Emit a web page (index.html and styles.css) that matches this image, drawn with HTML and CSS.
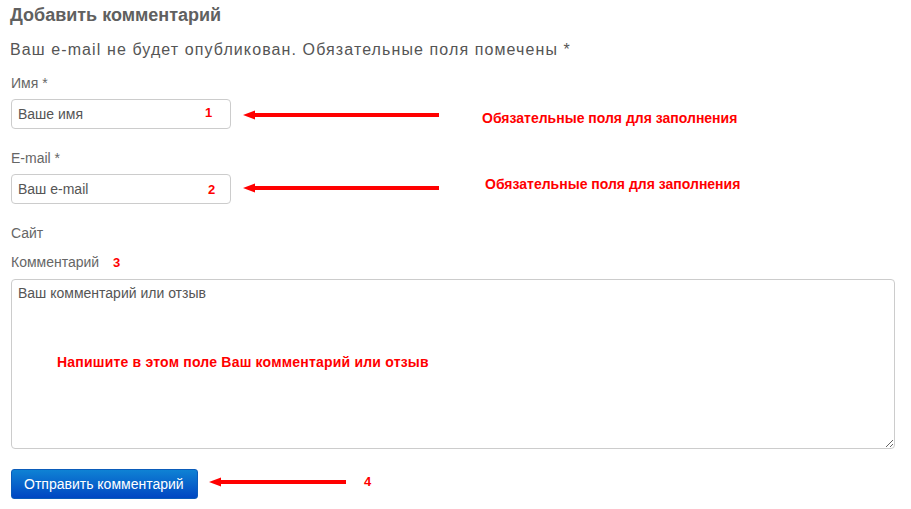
FILE: index.html
```html
<!DOCTYPE html>
<html lang="ru">
<head>
    <meta charset="UTF-8">
    <title>Добавить комментарий</title>
    <link rel="stylesheet" href="styles.css">
</head>
<body>
    <div class="respond">
        <h3 class="reply-title">Добавить комментарий</h3>
        <p class="notes">Ваш e-mail не будет опубликован. Обязательные поля помечены *</p>

        <form class="comment-form">
            <!-- Name -->
            <div class="field">
                <label for="author">Имя *</label>
                <input type="text" id="author" placeholder="Ваше имя">
                <span class="mark mark-1">1</span>
                <svg class="arrow arrow-1" width="196" height="10" viewBox="0 0 196 10">
                    <polygon points="0,5 12,0.5 12,9.5" fill="#f00"/>
                    <rect x="10" y="3" width="186" height="4" fill="#f00"/>
                </svg>
                <span class="note note-1">Обязательные поля для заполнения</span>
            </div>

            <!-- Email -->
            <div class="field">
                <label for="email">E-mail *</label>
                <input type="text" id="email" placeholder="Ваш e-mail">
                <span class="mark mark-2">2</span>
                <svg class="arrow arrow-2" width="196" height="10" viewBox="0 0 196 10">
                    <polygon points="0,5 12,0.5 12,9.5" fill="#f00"/>
                    <rect x="10" y="3" width="186" height="4" fill="#f00"/>
                </svg>
                <span class="note note-2">Обязательные поля для заполнения</span>
            </div>

            <!-- Url (hidden input) -->
            <div class="field field-url">
                <label>Сайт</label>
            </div>

            <!-- Comment -->
            <div class="field field-comment">
                <label for="comment">Комментарий</label>
                <textarea id="comment" placeholder="Ваш комментарий или отзыв"></textarea>
                <span class="mark mark-3">3</span>
                <span class="note note-3">Напишите в этом поле Ваш комментарий или отзыв</span>
            </div>

            <div class="form-submit">
                <button type="button">Отправить комментарий</button>
                <svg class="arrow arrow-4" width="137" height="10" viewBox="0 0 137 10">
                    <polygon points="0,5 12,0.5 12,9.5" fill="#f00"/>
                    <rect x="10" y="3" width="127" height="4" fill="#f00"/>
                </svg>
                <span class="mark mark-4">4</span>
            </div>
        </form>
    </div>
</body>
</html>
```

FILE: styles.css
```css
* {
    box-sizing: border-box;
}

body {
    margin: 0;
    background: #fff;
    color: #666;
    font-family: "Liberation Sans", Arial, sans-serif;
}

.respond {
    padding: 4px 16px 0 11px;
}

.reply-title {
    margin: 0 0 14px -1px;
    font-size: 18px;
    line-height: 22px;
    font-weight: bold;
    color: #606060;
}

.notes {
    margin: 0 0 13px -1px;
    font-size: 16px;
    line-height: 20px;
    letter-spacing: 1.1px;
    color: #555;
}

.field {
    position: relative;
    margin-bottom: 19px;
}

label {
    display: block;
    margin-bottom: 6px;
    font-size: 14px;
    line-height: 20px;
    color: #666;
}

input,
textarea {
    display: block;
    border: 1px solid #ccc;
    border-radius: 4px;
    font-family: "Liberation Sans", Arial, sans-serif;
    font-size: 14px;
    color: #555;
    background: #fff;
}

input {
    width: 220px;
    height: 30px;
    padding: 0 6px;
}

input::placeholder,
textarea::placeholder {
    color: #555;
    opacity: 1;
}

.field-url {
    margin-bottom: 9px;
}

.field-url label {
    margin-bottom: 0;
}

.field-comment {
    margin-bottom: 20px;
}

.field-comment label {
    margin-bottom: 7px;
}

textarea {
    width: 100%;
    height: 170px;
    padding: 3px 6px;
    line-height: 20px;
    resize: vertical;
}

.form-submit {
    position: relative;
}

button {
    height: 30px;
    padding: 0 13px 0 12px;
    border: 1px solid #0b5cba;
    border-radius: 3px;
    background: linear-gradient(#0f82d4, #0046c2);
    color: #fff;
    font-family: "Liberation Sans", Arial, sans-serif;
    font-size: 14px;
    cursor: pointer;
}

/* annotations */
.mark,
.note {
    position: absolute;
    color: #f00;
    font-weight: bold;
    white-space: nowrap;
}

.mark {
    font-size: 13px;
    line-height: 13px;
}

.note {
    font-size: 14px;
    line-height: 14px;
}

.note-3 {
    letter-spacing: 0.2px;
}

.arrow {
    position: absolute;
    display: block;
}

.mark-1 { top: 33px; left: 194px; }
.arrow-1 { top: 37px; left: 232px; }
.note-1 { top: 38px; left: 471px; }

.mark-2 { top: 35px; left: 197px; }
.arrow-2 { top: 35px; left: 232px; }
.note-2 { top: 29px; left: 474px; }

.mark-3 { top: 4px; left: 102px; }
.note-3 { top: 103px; left: 46px; }

.arrow-4 { top: 8px; left: 198px; }
.mark-4 { top: 6px; left: 353px; }
```
